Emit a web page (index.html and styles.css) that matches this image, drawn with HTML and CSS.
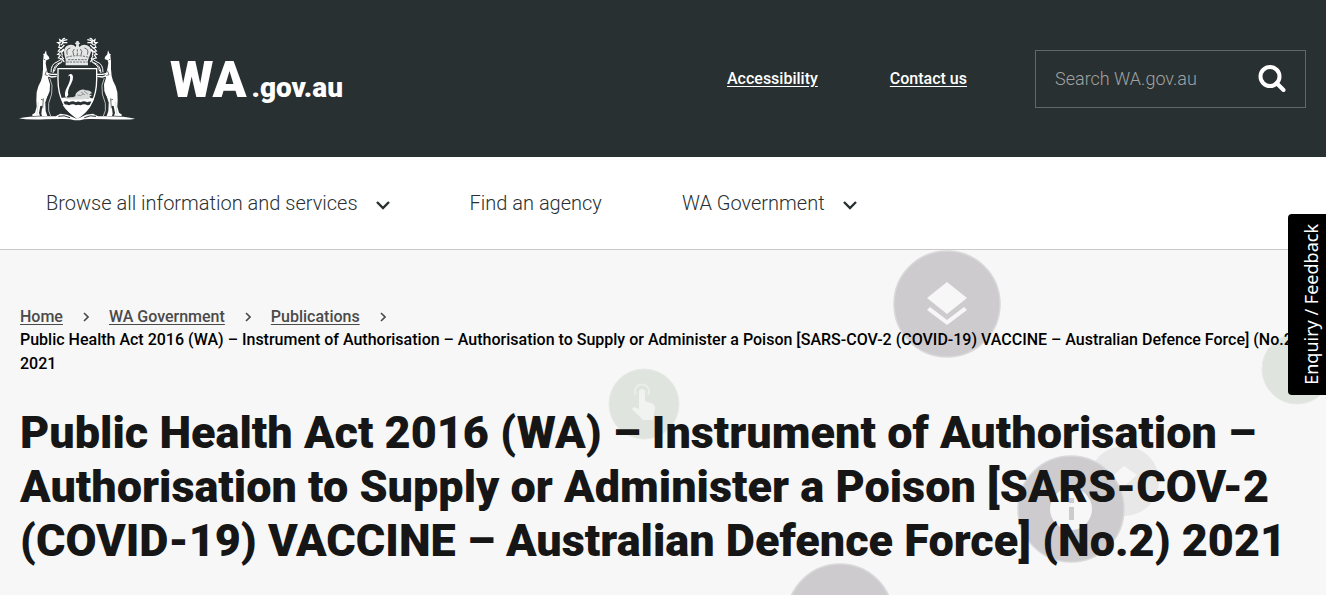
FILE: index.html
```html
<!DOCTYPE html>
<html lang="en">
<head>
<meta charset="utf-8">
<meta name="viewport" content="width=device-width, initial-scale=1">
<title>Public Health Act 2016 (WA) – WA.gov.au</title>
<link rel="stylesheet" href="styles.css">
</head>
<body>
<header class="masthead">
  <a class="brand" href="#">
    <svg class="crest" viewBox="27 33 348 252" aria-hidden="true">
      <defs>
        <g id="supporter">
          <path fill="#fff" d="M95 74l4 9 4 1 5-11 2 12 7 8 1 6-9 4-2 8 2 13 3 13 5 12-3 6 6 20-1 20-8 20-5 18 1 22 5 15h-16l-2-7 3-24-6 1-4 21 3 8-22 1-2-4 9-6 5-18-1-19 1-24 5-18 8-17 4-14 2-20v-25l2-17z"/>
          <path fill="none" stroke="#d4d6d6" stroke-width="2.5" d="M119 156l7 22-1 26-9 28v22l6 16M85 228l-4 38"/>
          <path fill="none" stroke="#293031" stroke-width="2" d="M110 134l-5 12 9 3M114 210l-8 22M93 220l7 2M101 99l5 3M100 217l-2 30"/>
          <path fill="none" stroke="#fff" stroke-width="4" d="M111 142l14 3 16 0M113 149l12 4 15-2"/>
          <path fill="none" stroke="#fff" stroke-width="3" d="M123 139q0-26 18-31l14-9M129 141q2-25 23-32M133 136q4-18 22-27l2-10"/>
        </g>
        <g id="plume">
          <path fill="none" stroke="#fff" stroke-width="3.5" stroke-linecap="round" d="M164 37q-7 1-8 9l-7-5 2 9-8 0 7 6-4 8 7 1-8 10 8 1-10 9 8 2-6 9 12 3 5 8"/>
          <path fill="none" stroke="#fff" stroke-width="3.5" d="M156 50l6-7 10-2M153 57l8-7 11 0M153 68l10-11M154 76l7-7M157 89l-2-10 8-8M161 99l-6-9"/>
        </g>
      </defs>
      <use href="#supporter"/>
      <use href="#supporter" transform="matrix(-1 0 0 1 402 0)"/>
      <use href="#plume"/>
      <use href="#plume" transform="matrix(-1 0 0 1 404 0)"/>
      <path fill="#e6e7e7" d="M163 86q-5-24 14-29 13-3 20 6l2-7-5-4 5-3v-4h7v4l5 3-5 4 2 7q10-10 23-5 18 7 9 29l-6 16v15h-67v-16z"/>
      <path fill="none" stroke="#293031" stroke-width="2" d="M172 86q-6-17 9-20M232 86q6-17-9-20M191 87q-6-12 2-18M213 87q6-12-2-18"/>
      <path fill="none" stroke="#293031" stroke-width="2" stroke-dasharray="7 3" d="M169 94q33-10 67 0M169 108h66M174 101h56M202 70v18"/>
      <path fill="none" stroke="#fff" stroke-width="4" d="M144 128h116v32q0 80-58 117-58-37-58-117z"/>
      <path fill="#fff" d="M153 218q10-7 20 0 11-7 22 0 7-4 14 0 11-7 21 0 10-4 22 0l-4 11q-8-5-16 0-11-6-20 0-8-5-14 0-11-6-20 0-9-6-19 0zM158 237q11-4 19 1 12-6 21 0 7-4 14 0 11-6 20 0l12-2q-15 27-42 39-30-15-44-38z"/>
      <path fill="#fff" d="M174 153q1-7 7-9 7-1 8 9 1 8-6 21-12 20-8 33l-7 8q-8-11 3-31 12-23 9-34-3-3-6 3z"/>
      <path fill="#d8dada" d="M168 213q14 4 28-2-1-10 11-17 13-7 20-1 14-1 19 9l-9 3 9 3-8 4 4 3-12 4q-38 4-62-1z"/>
      <path fill="none" stroke="#6a6f70" stroke-width="2" d="M202 207q10 5 18-3M213 198l12 9M222 195l12 10"/>
      <path fill="#fff" d="M27 277q30-8 110-6l14-8 20 3 30 13 27-13 21-3 15 8q77-2 111 7-17 4-85 2l-44-1q-23-1-36 4h-17q-12-5-37-4l-48 1q-60 2-81-3z"/>
      <path fill="none" stroke="#293031" stroke-width="3" d="M145 271q17-5 35 4M258 271q-17-5-35 4"/>
    </svg>
    <span class="wordmark"><span class="wordmark-wa">WA</span><span class="wordmark-domain">.gov.au</span></span>
  </a>
  <nav class="utility" aria-label="Utility">
    <a href="#">Accessibility</a>
    <a href="#">Contact us</a>
  </nav>
  <form class="search" role="search">
    <input class="search-input" type="search" placeholder="Search WA.gov.au" aria-label="Search WA.gov.au">
    <button class="search-button" type="button" aria-label="Search">
      <svg class="search-icon" viewBox="0 0 28 28" aria-hidden="true"><circle cx="12" cy="11.5" r="9.5"/><path d="M18.5 18L25.5 25"/></svg>
    </button>
  </form>
</header>
<nav class="main-nav" aria-label="Main">
  <button class="nav-item" type="button">Browse all information and services
    <svg class="chevron" viewBox="0 0 14 9" aria-hidden="true"><path d="M1 1l6 6 6-6"/></svg></button>
  <a class="nav-item" href="#">Find an agency</a>
  <button class="nav-item" type="button">WA Government
    <svg class="chevron" viewBox="0 0 14 9" aria-hidden="true"><path d="M1 1l6 6 6-6"/></svg></button>
</nav>
<main class="hero">
  <svg class="hero-art" viewBox="0 0 1326 345" preserveAspectRatio="xMidYMin slice" aria-hidden="true">
    <g fill="#cdcbce" stroke="#d9d8da" stroke-width="1.5">
      <circle cx="947" cy="54" r="53"/>
      <circle cx="840" cy="367" r="53"/>
    </g>
    <path fill="#f7f7f7" d="M947 32l20 16-20 16-20-16zM927 60l3-3 17 13 17-13 3 3-20 15z"/>
    <circle cx="644" cy="154" r="35" fill="#dfe4df" stroke="#e7e9e7"/>
    <path fill="none" stroke="#eceeec" stroke-width="2" d="M636 145a7 7 0 1 1 12 0"/>
    <path fill="#f1f3f1" d="M639 142q0-3 3-3t3 3v9l8 3q2 1 2 4l-2 12h-10l-11-11 2-2 5 2z"/>
    <circle cx="1297" cy="119" r="35" fill="#dfe4df" stroke="#e7e9e7"/>
    <circle cx="1124" cy="231" r="35" fill="#e8e8e8"/>
    <path fill="#f7f7f7" d="M1124 216l13 9-17 15-12-10z"/>
    <circle cx="1071" cy="259" r="53" fill="#cdcbce" stroke="#d9d8da" stroke-width="1.5"/>
    <circle cx="1071" cy="259" r="21" fill="#f7f7f7"/>
    <path fill="#cdcbce" d="M1069 257h5v13h-5zM1069 248h5v5h-5z"/>
  </svg>
  <nav class="breadcrumb" aria-label="Breadcrumb">
    <ol class="crumbs">
      <li class="crumb"><a href="#">Home</a><svg class="crumb-arrow" viewBox="0 0 6 10" aria-hidden="true"><path d="M1 1l4 4-4 4"/></svg></li>
      <li class="crumb"><a href="#">WA Government</a><svg class="crumb-arrow" viewBox="0 0 6 10" aria-hidden="true"><path d="M1 1l4 4-4 4"/></svg></li>
      <li class="crumb"><a href="#">Publications</a><svg class="crumb-arrow" viewBox="0 0 6 10" aria-hidden="true"><path d="M1 1l4 4-4 4"/></svg></li>
      <li class="crumb-current" aria-current="page">Public Health Act 2016 (WA) – Instrument of Authorisation – Authorisation to Supply or Administer a Poison [SARS-COV-2 (COVID-19) VACCINE – Australian Defence Force] (No.2) 2021</li>
    </ol>
  </nav>
  <h1 class="title">Public Health Act 2016 (WA) – Instrument of Authorisation – Authorisation to Supply or Administer a Poison [SARS-COV-2 (COVID-19) VACCINE – Australian Defence Force] (No.2) 2021</h1>
</main>
<button class="feedback" type="button">Enquiry / Feedback</button>
</body>
</html>
```
FILE: styles.css
```css
* { box-sizing: border-box; }
body {
  margin: 0;
  min-height: 100vh;
  display: flex;
  flex-direction: column;
  overflow-x: hidden;
  background: #f7f7f7;
  color: #000;
  font-family: Roboto, "Liberation Sans", sans-serif;
}
button, input { font: inherit; }
.masthead {
  display: flex;
  align-items: center;
  min-height: 157px;
  padding: 0 20px 0 19px;
  background: #293031;
  color: #fff;
}
.brand {
  display: flex;
  align-items: center;
  gap: 35px;
  color: #fff;
  text-decoration: none;
}
.crest { width: 116px; height: 84px; }
.wordmark { display: flex; align-items: baseline; gap: 5px; padding-top: 10px; font-weight: 900; line-height: 56px; }
.wordmark-wa { font-size: 50px; }
.wordmark-domain { font-size: 28px; }
.utility { display: flex; gap: 72px; margin-left: auto; }
.utility a { color: #fff; font-size: 16px; font-weight: 500; text-underline-offset: 2px; }
.search {
  display: flex;
  align-items: center;
  width: 271px;
  height: 58px;
  margin-left: 68px;
  border: 1px solid #636768;
}
.search-input {
  flex: 1;
  min-width: 0;
  padding: 0 0 0 19px;
  border: 0;
  background: transparent;
  color: #fff;
  font-size: 18px;
  font-weight: 300;
}
.search-input::placeholder { color: #a0a3a3; opacity: 1; }
.search-button { display: flex; padding: 0 19px; border: 0; background: transparent; }
.search-icon { width: 28px; height: 28px; fill: none; stroke: #fff; stroke-width: 4; stroke-linecap: round; }
.main-nav {
  display: flex;
  align-items: center;
  gap: 80px;
  min-height: 93px;
  padding: 0 46px;
  border-bottom: 1px solid #c9c9c9;
  background: #fff;
}
.nav-item {
  display: flex;
  align-items: center;
  gap: 18px;
  padding: 0;
  border: 0;
  background: none;
  color: #293031;
  font-size: 20px;
  font-weight: 300;
  text-decoration: none;
}
.chevron { width: 14px; height: 9px; margin-top: 4px; fill: none; stroke: #293031; stroke-width: 2.4; }
.hero { position: relative; flex: 1; padding: 55px 20px 0; }
.hero-art { position: absolute; top: 0; left: 0; width: 100%; height: 100%; }
.breadcrumb, .title { position: relative; }
.crumbs {
  display: flex;
  flex-wrap: wrap;
  margin: 0;
  padding: 0;
  list-style: none;
  font-size: 16px;
  font-weight: 500;
  line-height: 24px;
}
.crumb { display: flex; align-items: center; gap: 20px; margin-right: 20px; line-height: 23px; }
.crumb a { color: #4a4a4a; text-underline-offset: 2px; }
.crumb-arrow { width: 6px; height: 10px; fill: none; stroke: #4a4a4a; stroke-width: 1.6; }
.crumb-current { width: 100%; }
.title { margin: 30px 0 0; color: #161616; font-size: 45px; font-weight: 900; line-height: 54px; }
.feedback {
  position: fixed;
  top: 214px;
  right: 0;
  width: 38px;
  height: 181px;
  padding: 0 0 0 8px;
  border: 0;
  border-radius: 4px 0 0 4px;
  background: #000;
  color: #fff;
  font-family: "Noto Sans", sans-serif;
  font-size: 18px;
  writing-mode: sideways-lr;
}
```
